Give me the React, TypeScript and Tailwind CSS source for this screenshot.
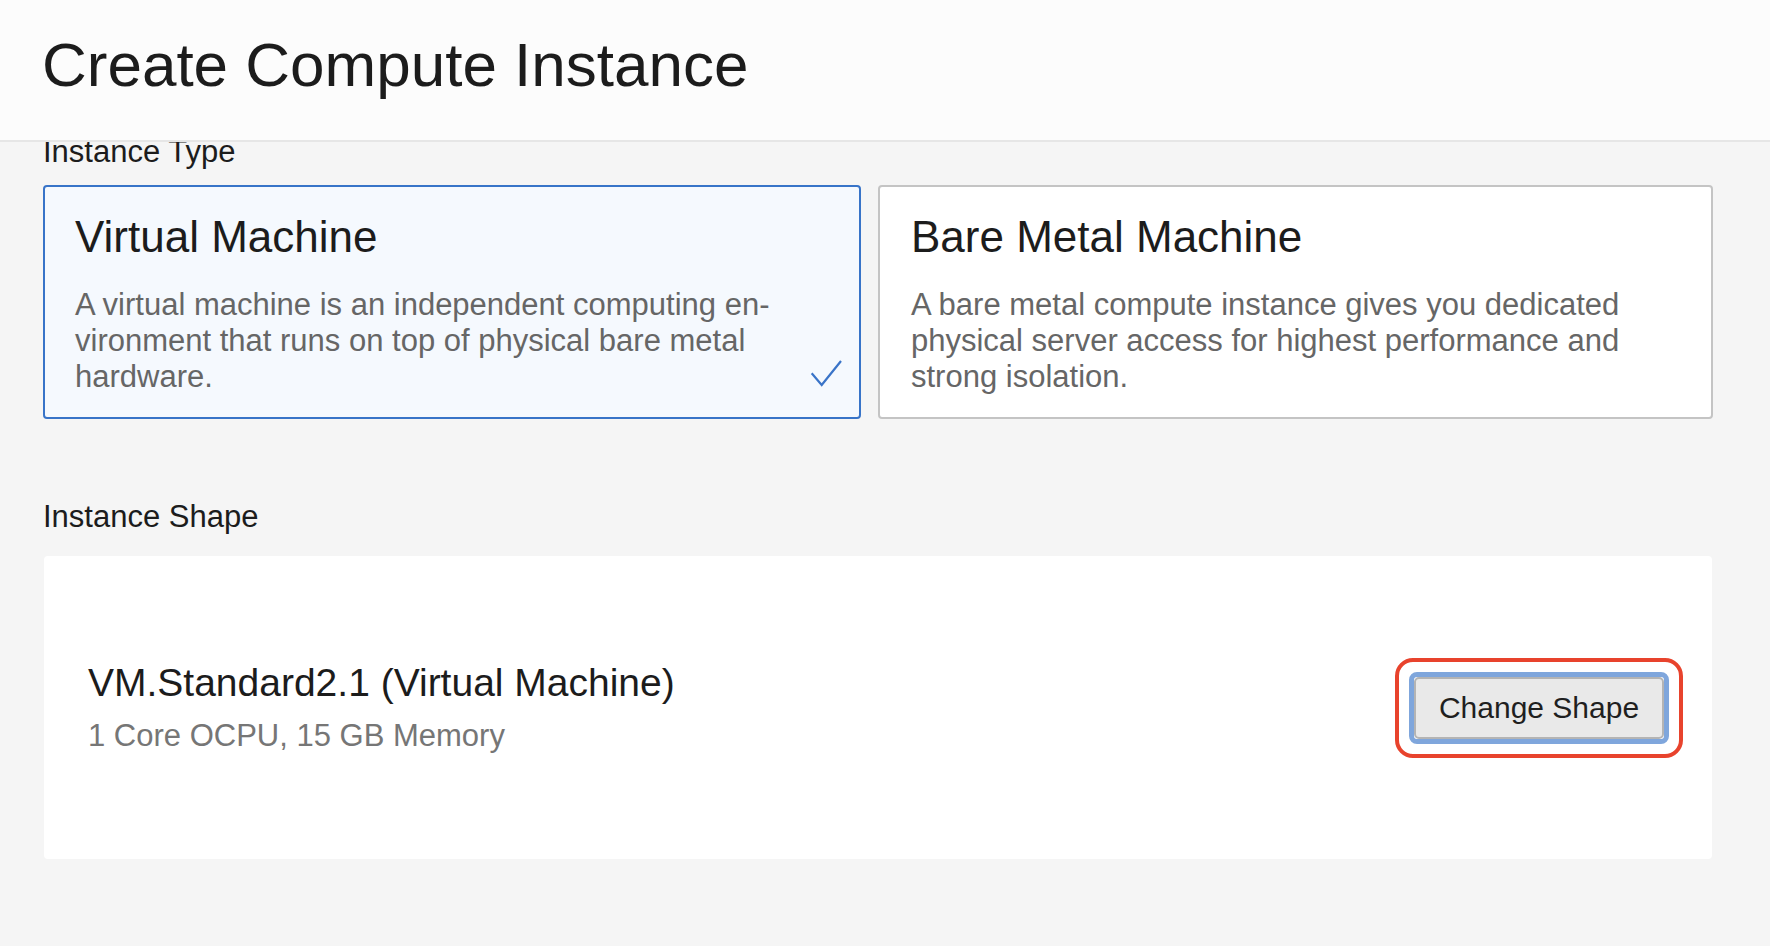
import React from 'react';

const FONT = { fontFamily: '"Liberation Sans", Arial, Helvetica, sans-serif' };

function TypeCard({
  title,
  lines,
  selected,
}: {
  title: string;
  lines: string[];
  selected?: boolean;
}) {
  return (
    <div
      className={
        selected
          ? 'relative rounded-[4px] border-2 border-[#3874c8] bg-[#f5f9fe] px-[30px] pt-[24px] pb-[22px]'
          : 'relative rounded-[4px] border-2 border-[#c4c4c4] bg-white px-[31px] pt-[24px] pb-[22px]'
      }
    >
      <h2 className="text-[44px] leading-[52px] text-[#1c1c1c]">{title}</h2>
      <p className="mt-[24px] text-[31px] leading-[36px] text-[#666666]">
        {lines.map((line, i) => (
          <React.Fragment key={i}>
            {line}
            {i < lines.length - 1 && <br />}
          </React.Fragment>
        ))}
      </p>
      {selected && (
        <svg
          className="absolute right-[17px] bottom-[30px]"
          width="34"
          height="30"
          viewBox="0 0 34 30"
          fill="none"
        >
          <path d="M3.7 16.3 L13.7 28 L33 4" stroke="#3a74c8" strokeWidth="2.2" />
        </svg>
      )}
    </div>
  );
}

export default function App() {
  return (
    <div className="h-[946px] overflow-hidden bg-[#f5f5f5]" style={FONT}>
      {/* sticky page header */}
      <header className="relative z-10 h-[142px] border-b-2 border-[#e6e6e6] bg-[#fcfcfc] pl-[42px] pt-[30px]">
        <h1 className="text-[62px] leading-[70px] text-[#1c1c1c]">Create Compute Instance</h1>
      </header>

      <main className="pl-[43px]">
        <div className="-mt-[8px] text-[31px] leading-[36px] text-[#1c1c1c]">Instance Type</div>

        <div className="mt-[15px] grid grid-cols-[818px_835px] gap-x-[17px]">
          <TypeCard
            selected
            title="Virtual Machine"
            lines={[
              'A virtual machine is an independent computing en-',
              'vironment that runs on top of physical bare metal',
              'hardware.',
            ]}
          />
          <TypeCard
            title="Bare Metal Machine"
            lines={[
              'A bare metal compute instance gives you dedicated',
              'physical server access for highest performance and',
              'strong isolation.',
            ]}
          />
        </div>

        <div className="mt-[80px] text-[31px] leading-[36px] text-[#1c1c1c]">Instance Shape</div>

        <div className="mt-[21px] ml-[1px] flex h-[303px] w-[1668px] items-center justify-between rounded-[4px] bg-white pl-[44px] pr-[29px]">
          <div>
            <div className="text-[39px] leading-[44px] text-[#1c1c1c]">
              VM.Standard2.1 (Virtual Machine)
            </div>
            <div className="mt-[13px] text-[31px] leading-[36px] text-[#767676]">
              1 Core OCPU, 15 GB Memory
            </div>
          </div>

          <div className="rounded-[18px] border-4 border-[#e8432d] p-[10px]">
            <div className="rounded-[8px] border-[5px] border-[#7fa6dc]">
              <button
                type="button"
                className="block h-[62px] w-[250px] rounded-[5px] border-2 border-[#b4b4b4] bg-[#e9e9e9] text-[30px] text-[#1f1f1f]"
              >
                Change Shape
              </button>
            </div>
          </div>
        </div>
      </main>
    </div>
  );
}
